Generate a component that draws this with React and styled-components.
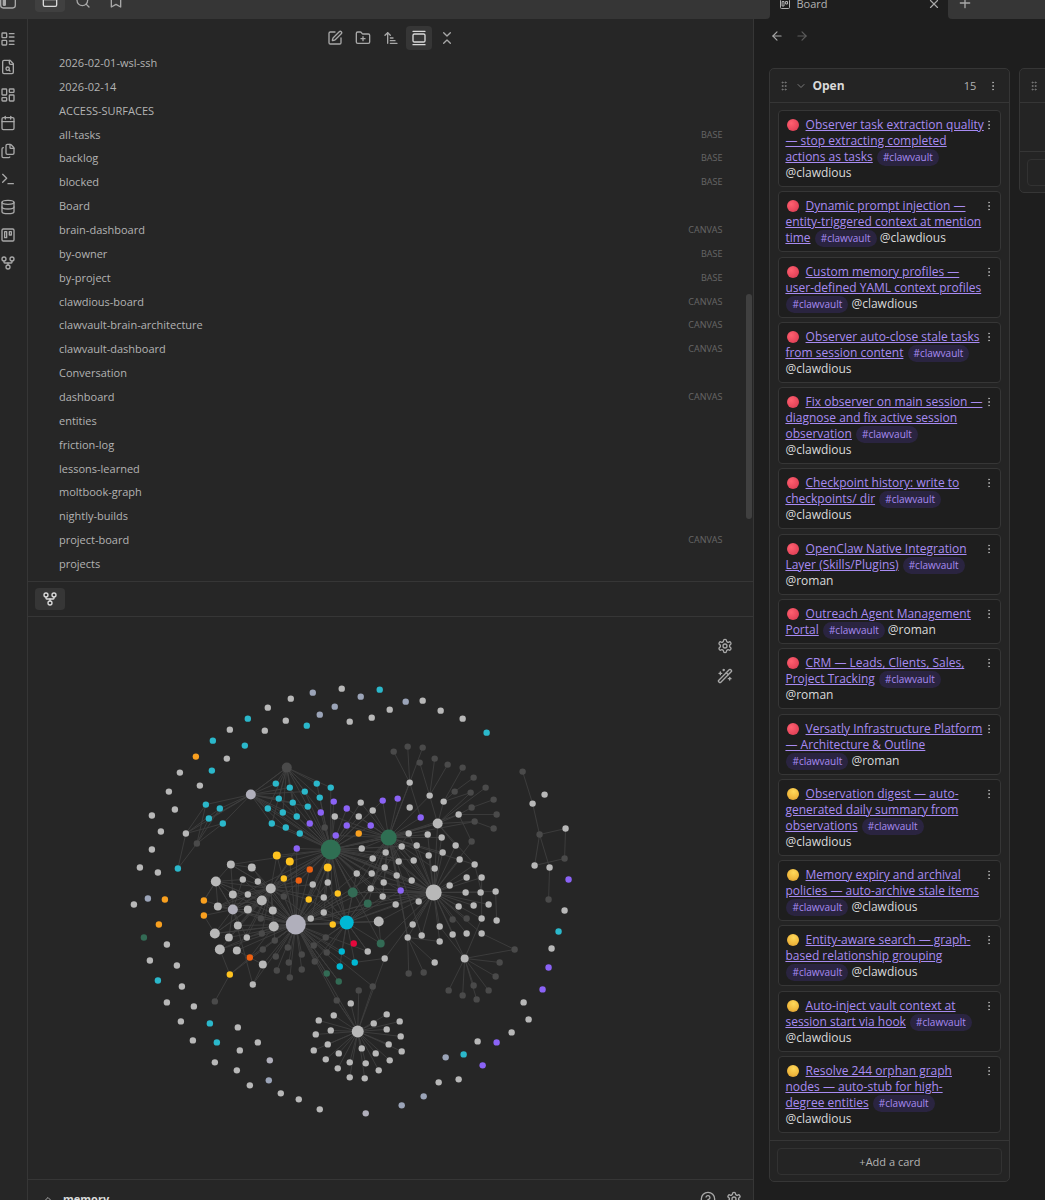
import { useState } from "react";
import styled, { createGlobalStyle, css } from "styled-components";
import {
  ArrowLeft,
  ArrowRight,
  ArrowUpNarrowWide,
  Bookmark,
  Calendar,
  ChevronDown,
  ChevronUp,
  ChevronsDownUp,
  CircleHelp,
  Database,
  EllipsisVertical,
  Files,
  FolderPlus,
  GalleryVertical,
  GitFork,
  GripVertical,
  LayoutDashboard,
  LayoutList,
  Plus,
  Search,
  SquarePen,
  Terminal,
  Trello,
  WandSparkles,
  X,
} from "lucide-react";

const files = [
  ["2026-02-01-wsl-ssh"],
  ["2026-02-14"],
  ["ACCESS-SURFACES"],
  ["all-tasks", "BASE"],
  ["backlog", "BASE"],
  ["blocked", "BASE"],
  ["Board"],
  ["brain-dashboard", "CANVAS"],
  ["by-owner", "BASE"],
  ["by-project", "BASE"],
  ["clawdious-board", "CANVAS"],
  ["clawvault-brain-architecture", "CANVAS"],
  ["clawvault-dashboard", "CANVAS"],
  ["Conversation"],
  ["dashboard", "CANVAS"],
  ["entities"],
  ["friction-log"],
  ["lessons-learned"],
  ["moltbook-graph"],
  ["nightly-builds"],
  ["project-board", "CANVAS"],
  ["projects"],
];

const cards = [
  { level: "red", title: "Observer task extraction quality — stop extracting completed actions as tasks", owner: "@clawdious" },
  { level: "red", title: "Dynamic prompt injection — entity-triggered context at mention time", owner: "@clawdious" },
  { level: "red", title: "Custom memory profiles — user-defined YAML context profiles", owner: "@clawdious" },
  { level: "red", title: "Observer auto-close stale tasks from session content", owner: "@clawdious" },
  { level: "red", title: "Fix observer on main session — diagnose and fix active session observation", owner: "@clawdious" },
  { level: "red", title: "Checkpoint history: write to checkpoints/ dir", owner: "@clawdious" },
  { level: "red", title: "OpenClaw Native Integration Layer (Skills/Plugins)", owner: "@roman" },
  { level: "red", title: "Outreach Agent Management Portal", owner: "@roman" },
  { level: "red", title: "CRM — Leads, Clients, Sales, Project Tracking", owner: "@roman" },
  { level: "red", title: "Versatly Infrastructure Platform — Architecture & Outline", owner: "@roman" },
  { level: "yellow", title: "Observation digest — auto-generated daily summary from observations", owner: "@clawdious" },
  { level: "yellow", title: "Memory expiry and archival policies — auto-archive stale items", owner: "@clawdious" },
  { level: "yellow", title: "Entity-aware search — graph-based relationship grouping", owner: "@clawdious" },
  { level: "yellow", title: "Auto-inject vault context at session start via hook", owner: "@clawdious" },
  { level: "yellow", title: "Resolve 244 orphan graph nodes — auto-stub for high-\ndegree entities", owner: "@clawdious" },
];

const colors = {
  gray: "#b8b8b8",
  slate: "#9ba4b8",
  lavender: "#b0afbb",
  dark: "#4a4a4a",
  teal: "#2bb8cb",
  cyan: "#00b8d4",
  purple: "#8b63f6",
  orange: "#f9a01f",
  ember: "#ee6010",
  yellow: "#ffc31f",
  green: "#2f6f53",
  moss: "#336b55",
  red: "#e5083c",
};

// nodes without any link, [x, y] or [x, y, radius]
const orphans = {
  gray: [
    [341, 688], [290, 698], [267, 707], [229, 729], [285, 720], [264, 730], [226, 758], [179, 772], [199, 785],
    [168, 791], [174, 809], [151, 815], [160, 831], [151, 849], [139, 867], [157, 872], [349, 721], [133, 904],
    [166, 944], [149, 960], [176, 965], [181, 986], [166, 1002], [193, 1006], [180, 1021], [192, 1040],
    [237, 1027], [257, 1042], [239, 1050], [214, 1062], [236, 1070], [249, 1085], [280, 1093], [298, 1099],
    [319, 1109], [422, 700], [389, 709], [371, 717], [440, 710], [462, 718], [544, 794], [564, 910], [551, 948],
    [523, 1002], [528, 1019], [511, 1032], [477, 1041], [458, 1079], [438, 1082], [409, 807], [434, 962],
  ],
  slate: [
    [312, 692], [334, 706], [319, 714], [147, 898], [268, 1080], [360, 696], [405, 701], [445, 1057],
    [423, 1096], [401, 1105],
  ],
  lavender: [[269, 1060], [365, 1113]],
  teal: [
    [247, 718], [212, 740], [244, 745], [211, 770], [306, 725], [379, 689], [486, 732], [157, 980], [209, 1023],
    [216, 1042], [558, 931], [463, 1054],
  ],
  purple: [[568, 879], [548, 967], [542, 989], [496, 1042], [482, 1065]],
  orange: [[195, 756], [164, 899], [158, 924]],
  moss: [[143, 937]],
  red: [[353, 943]],
};

const linked = {
  dark: [
    [286, 767, 5], [196, 843], [324, 827], [283, 896], [260, 918], [261, 933], [274, 940], [262, 949], [275, 956],
    [276, 970], [287, 947], [288, 962], [289, 977], [301, 954], [301, 969], [313, 945], [314, 961], [326, 952],
    [325, 937], [214, 1001], [336, 1000], [358, 990], [372, 986], [452, 919], [466, 918], [408, 973], [423, 972],
    [514, 949], [499, 962], [495, 976], [448, 990], [462, 995], [473, 985], [488, 990], [476, 999], [393, 751],
    [407, 746], [422, 747], [419, 762], [434, 758], [447, 764], [462, 767], [473, 777], [485, 787], [454, 791],
    [470, 792], [493, 799], [471, 807], [496, 814], [474, 821], [493, 828], [471, 841], [522, 771], [539, 834],
    [564, 858], [548, 899],
  ],
  gray: [
    [185, 833], [334, 816], [312, 884], [327, 882], [323, 897], [230, 864, 4], [251, 867, 4], [242, 879],
    [257, 881], [215, 881, 5], [270, 888, 5], [232, 894, 4], [247, 894], [261, 900, 5], [217, 906, 4],
    [247, 909, 4], [272, 910, 4], [237, 925, 4], [273, 926, 5], [214, 933, 5], [228, 937, 4], [246, 937],
    [219, 949, 5], [236, 950, 4], [262, 964, 4], [252, 984], [310, 918], [323, 912], [318, 1020], [333, 1015],
    [315, 1034], [330, 1030], [313, 1050], [327, 1044], [338, 1053], [325, 1059], [337, 1068], [349, 1062],
    [349, 1077], [350, 1003], [373, 1023], [386, 1014], [399, 1021], [386, 1029], [400, 1036], [388, 1044],
    [401, 1051], [361, 1048], [375, 1053], [389, 1060], [365, 1063], [378, 1070], [364, 1078], [367, 951],
    [384, 958], [378, 921, 5], [370, 888], [382, 896], [395, 904], [383, 882], [418, 901], [412, 924], [407, 937],
    [421, 935], [439, 926], [439, 941], [452, 934], [466, 933], [481, 933], [464, 958, 4], [458, 906], [473, 905],
    [488, 904], [481, 918], [496, 920], [465, 892], [480, 892], [495, 891], [449, 885], [409, 782], [429, 795],
    [443, 801], [458, 814], [437, 823, 5], [408, 833], [427, 834], [441, 837], [455, 845], [401, 846], [416, 845],
    [385, 852], [398, 861], [413, 860], [428, 855], [442, 852], [459, 859], [474, 864], [372, 858], [384, 867],
    [361, 848], [434, 868], [466, 877], [481, 877], [396, 875], [411, 880], [371, 873], [356, 873], [358, 816],
    [360, 802], [372, 810], [532, 803], [565, 828], [534, 865], [549, 867], [357, 1031, 6], [433, 892, 8],
  ],
  lavender: [[250, 794, 5], [232, 909, 5], [295, 924, 10]],
  teal: [
    [205, 804], [219, 808], [208, 818], [222, 823], [177, 868], [275, 783], [289, 787], [304, 791], [316, 783],
    [330, 787], [278, 798], [292, 802], [307, 806], [319, 797], [267, 808], [282, 812], [296, 816], [271, 823],
    [285, 827], [299, 833],
  ],
  cyan: [[346, 922, 7], [341, 951], [339, 966], [354, 962]],
  purple: [
    [333, 801], [320, 812], [309, 823], [346, 808], [346, 825], [335, 835], [296, 848], [382, 800], [397, 798],
    [420, 817], [370, 825], [400, 890],
  ],
  orange: [[203, 900], [203, 915], [358, 833]],
  ember: [[309, 869], [298, 880], [249, 957]],
  yellow: [[276, 855, 4], [289, 861, 4], [283, 878], [327, 867, 4], [337, 893], [308, 899], [332, 924], [229, 974]],
  moss: [[326, 973], [338, 981], [352, 892, 5], [367, 903, 4], [380, 943, 4]],
  green: [[330, 849, 10], [388, 837, 8]],
};

// every linked node inside the reach of a hub gets a line to it
const hubs = [
  [330, 849, 78],
  [388, 837, 62],
  [433, 892, 66],
  [295, 924, 86],
  [346, 922, 52],
  [357, 1031, 50],
  [286, 767, 58],
  [250, 794, 60],
  [270, 888, 56],
  [215, 881, 36],
  [232, 909, 34],
];

const extraLinks = [
  [330, 849, 388, 837], [330, 849, 437, 823], [330, 849, 433, 892], [330, 849, 411, 880], [330, 849, 396, 875],
  [330, 849, 413, 860], [330, 849, 416, 845], [330, 849, 230, 864], [330, 849, 217, 906], [330, 849, 232, 909],
  [330, 849, 250, 794], [330, 849, 214, 933], [330, 849, 418, 901], [330, 849, 380, 943], [330, 849, 395, 904],
  [295, 924, 433, 892], [295, 924, 352, 892], [295, 924, 384, 867], [295, 924, 378, 921], [295, 924, 336, 1000],
  [295, 924, 367, 903], [295, 924, 326, 973], [295, 924, 338, 981], [295, 924, 372, 986], [295, 924, 357, 1031],
  [346, 922, 433, 892], [346, 922, 367, 951], [346, 922, 408, 833], [346, 922, 395, 904], [346, 922, 400, 890],
  [352, 892, 388, 837], [352, 892, 433, 892], [352, 892, 330, 849], [367, 903, 388, 837], [367, 903, 433, 892],
  [380, 943, 433, 892], [380, 943, 378, 921], [384, 958, 433, 892], [384, 958, 357, 1031], [384, 958, 354, 962],
  [336, 1000, 357, 1031], [388, 837, 437, 823], [388, 837, 433, 892], [388, 837, 474, 821], [388, 837, 458, 814],
  [388, 837, 407, 937], [388, 837, 421, 935], [388, 837, 474, 864],
  [407, 937, 408, 973], [407, 937, 423, 972], [407, 937, 434, 962], [407, 937, 396, 875], [407, 937, 439, 941],
  [464, 958, 514, 949], [464, 958, 499, 962], [464, 958, 495, 976], [464, 958, 448, 990], [464, 958, 462, 995],
  [464, 958, 473, 985], [464, 958, 488, 990], [464, 958, 476, 999], [464, 958, 433, 892], [464, 958, 481, 918],
  [464, 958, 439, 926], [481, 933, 514, 949], [481, 877, 481, 918], [495, 891, 496, 920], [474, 864, 481, 892],
  [409, 782, 393, 751], [409, 782, 407, 746], [409, 782, 422, 747], [409, 782, 420, 817], [409, 782, 388, 837],
  [429, 795, 419, 762], [429, 795, 434, 758], [429, 795, 437, 823], [429, 795, 447, 764], [437, 823, 443, 801],
  [443, 801, 462, 767], [443, 801, 454, 791], [454, 791, 473, 777], [443, 801, 470, 792], [437, 823, 485, 787],
  [437, 823, 458, 814], [458, 814, 471, 807], [471, 807, 493, 799], [458, 814, 496, 814], [437, 823, 474, 821],
  [474, 821, 493, 828], [458, 814, 471, 841], [437, 823, 455, 845], [437, 823, 474, 864], [437, 823, 433, 892],
  [437, 823, 470, 792], [522, 771, 532, 803], [532, 803, 539, 834], [539, 834, 565, 828], [565, 828, 564, 858],
  [564, 858, 534, 865], [534, 865, 539, 834], [539, 834, 549, 867], [549, 867, 548, 899],
  [185, 833, 205, 804], [185, 833, 219, 808], [185, 833, 222, 823], [185, 833, 177, 868], [185, 833, 250, 794],
  [196, 843, 205, 804], [196, 843, 208, 818], [196, 843, 222, 823], [196, 843, 177, 868], [196, 843, 219, 808],
  [203, 900, 215, 881], [203, 915, 214, 933], [219, 949, 229, 974], [214, 1001, 229, 974], [229, 974, 249, 957],
  [249, 957, 273, 926], [236, 925, 252, 984], [262, 964, 252, 984], [262, 964, 236, 950], [230, 864, 270, 888],
  [230, 864, 251, 867], [214, 933, 261, 900], [219, 949, 261, 900], [219, 949, 273, 926], [214, 933, 273, 926],
  [228, 937, 270, 888], [236, 950, 270, 888], [217, 906, 261, 900], [215, 881, 261, 900], [230, 864, 232, 894],
];

function buildLinks() {
  const nodes = Object.values(linked).flat();
  const around = hubs.flatMap(([hx, hy, reach]) =>
    nodes
      .filter(([x, y]) => {
        const d = Math.hypot(x - hx, y - hy);
        return d > 1 && d < reach;
      })
      .map(([x, y]) => [hx, hy, x, y])
  );
  return [...around, ...extraLinks];
}

const links = buildLinks();

function Dots({ groups }) {
  return Object.entries(groups).map(([name, nodes]) => (
    <g key={name} fill={colors[name]}>
      {nodes.map(([x, y, r = 3.2]) => (
        <circle key={`${x}-${y}`} cx={x} cy={y} r={r} />
      ))}
    </g>
  ));
}

function Graph() {
  return (
    <GraphSvg viewBox="27 617 726 561" role="img" aria-label="Graph view">
      <g stroke="#3e3e3e" strokeWidth="0.9">
        {links.map(([x1, y1, x2, y2], index) => (
          <line key={index} x1={x1} y1={y1} x2={x2} y2={y2} />
        ))}
      </g>
      <Dots groups={orphans} />
      <Dots groups={linked} />
    </GraphSvg>
  );
}

function Glyph({ size = 16, children }) {
  return (
    <svg
      width={size}
      height={size}
      viewBox="0 0 24 24"
      fill="none"
      stroke="currentColor"
      strokeWidth="2"
      strokeLinecap="round"
      strokeLinejoin="round"
    >
      {children}
    </svg>
  );
}

function FileSearchIcon() {
  return (
    <Glyph>
      <path d="M15 2H6a2 2 0 0 0-2 2v16a2 2 0 0 0 2 2h12a2 2 0 0 0 2-2V7Z" />
      <path d="M14 2v4a2 2 0 0 0 2 2h4" />
      <circle cx="11.5" cy="14.5" r="2.5" />
      <path d="M13.3 16.3 15 18" />
    </Glyph>
  );
}

function SidebarIcon() {
  return (
    <Glyph>
      <rect x="1" y="3" width="22" height="18" rx="4" />
      <rect x="5" y="7" width="3" height="10" rx="1" fill="currentColor" />
    </Glyph>
  );
}

function FolderIcon() {
  return (
    <Glyph>
      <path d="M20 20a2 2 0 0 0 2-2V8a2 2 0 0 0-2-2h-7.9a2 2 0 0 1-1.69-.9L9.6 3.9A2 2 0 0 0 7.93 3H4a2 2 0 0 0-2 2v13a2 2 0 0 0 2 2Z" />
      <path d="M2 10h20" />
    </Glyph>
  );
}

function GearIcon() {
  return (
    <Glyph>
      <path d="M12.22 2h-.44a2 2 0 0 0-2 2v.18a2 2 0 0 1-1 1.73l-.43.25a2 2 0 0 1-2 0l-.15-.08a2 2 0 0 0-2.73.73l-.22.38a2 2 0 0 0 .73 2.73l.15.1a2 2 0 0 1 1 1.72v.51a2 2 0 0 1-1 1.74l-.15.09a2 2 0 0 0-.73 2.73l.22.38a2 2 0 0 0 2.73.73l.15-.08a2 2 0 0 1 2 0l.43.25a2 2 0 0 1 1 1.73V20a2 2 0 0 0 2 2h.44a2 2 0 0 0 2-2v-.18a2 2 0 0 1 1-1.73l.43-.25a2 2 0 0 1 2 0l.15.08a2 2 0 0 0 2.73-.73l.22-.39a2 2 0 0 0-.73-2.73l-.15-.08a2 2 0 0 1-1-1.74v-.5a2 2 0 0 1 1-1.74l.15-.09a2 2 0 0 0 .73-2.73l-.22-.38a2 2 0 0 0-2.73-.73l-.15.08a2 2 0 0 1-2 0l-.43-.25a2 2 0 0 1-1-1.73V4a2 2 0 0 0-2-2z" />
      <circle cx="12" cy="12" r="3" />
    </Glyph>
  );
}

const ribbon = [
  ["Outline", LayoutList],
  ["Search in file", FileSearchIcon],
  ["Dashboard", LayoutDashboard],
  ["Daily note", Calendar],
  ["Templates", Files],
  ["Command palette", Terminal],
  ["Bases", Database],
  ["New board", Trello],
  ["Graph view", GitFork],
];

const tools = [
  ["New note", SquarePen],
  ["New folder", FolderPlus],
  ["Change sort order", ArrowUpNarrowWide],
  ["Auto-reveal current file", GalleryVertical],
  ["Collapse all", ChevronsDownUp],
];

function Card({ card }) {
  return (
    <CardBox>
      <CardText>
        <Ball level={card.level} role="img" aria-label={card.level} />{" "}
        <a href="#task">{card.title}</a> <Tag href="#clawvault">#clawvault</Tag>{" "}
        {card.owner}
      </CardText>
      <CardMenu aria-label="Card menu">
        <EllipsisVertical size={12} />
      </CardMenu>
    </CardBox>
  );
}

export default function App() {
  const [tool, setTool] = useState("Auto-reveal current file");

  return (
    <>
      <GlobalStyle />
      <Window>
        <Ribbon>
          <RibbonTop>
            <IconButton bare aria-label="Collapse sidebar">
              <SidebarIcon />
            </IconButton>
          </RibbonTop>
          <RibbonList>
            {ribbon.map(([label, Icon]) => (
              <IconButton bare key={label} aria-label={label}>
                <Icon size={16} />
              </IconButton>
            ))}
          </RibbonList>
        </Ribbon>

        <Sidebar>
          <SideTabs>
            <IconButton tab active aria-label="Files">
              <FolderIcon />
            </IconButton>
            <IconButton tab aria-label="Search">
              <Search size={16} />
            </IconButton>
            <IconButton tab aria-label="Bookmarks">
              <Bookmark size={16} />
            </IconButton>
          </SideTabs>
          <Panels>
            <Explorer>
              <Toolbar>
                {tools.map(([label, Icon]) => (
                  <IconButton
                    key={label}
                    aria-label={label}
                    active={tool === label}
                    onClick={() => setTool(label)}
                  >
                    <Icon size={16} />
                  </IconButton>
                ))}
              </Toolbar>
              <FileList>
                {files.map(([name, kind]) => (
                  <FileRow key={name}>
                    <span>{name}</span>
                    {kind && <small>{kind}</small>}
                  </FileRow>
                ))}
              </FileList>
              <Scrollbar />
            </Explorer>
            <GraphTabs>
              <IconButton tab active aria-label="Graph">
                <GitFork size={16} />
              </IconButton>
            </GraphTabs>
            <GraphPanel>
              <Graph />
              <GraphControls>
                <IconButton bare aria-label="Graph settings">
                  <GearIcon />
                </IconButton>
                <IconButton bare aria-label="Animate">
                  <WandSparkles size={16} />
                </IconButton>
              </GraphControls>
            </GraphPanel>
            <VaultBar>
              <VaultRow>
                <ChevronUp size={12} />
                <strong>memory</strong>
                <IconButton aria-label="Help">
                  <CircleHelp size={16} />
                </IconButton>
                <IconButton aria-label="Settings">
                  <GearIcon />
                </IconButton>
              </VaultRow>
            </VaultBar>
          </Panels>
        </Sidebar>

        <Main>
          <TabBar>
            <TabGap />
            <Tab>
              <TabContent>
                <Trello size={12} />
                <span>Board</span>
                <IconButton small aria-label="Close tab">
                  <X size={14} />
                </IconButton>
              </TabContent>
            </Tab>
            <NewTab>
              <IconButton tab aria-label="New tab">
                <Plus size={16} />
              </IconButton>
            </NewTab>
          </TabBar>
          <NavRow>
            <IconButton small aria-label="Back">
              <ArrowLeft size={14} />
            </IconButton>
            <IconButton small disabled aria-label="Forward">
              <ArrowRight size={14} />
            </IconButton>
          </NavRow>
          <Board>
            <Lane full>
              <LaneHeader>
                <GripVertical size={12} />
                <ChevronDown size={12} />
                <h2>Open</h2>
                <span>15</span>
                <IconButton small aria-label="Lane menu">
                  <EllipsisVertical size={12} />
                </IconButton>
              </LaneHeader>
              <CardList>
                {cards.map((card) => (
                  <Card key={card.title} card={card} />
                ))}
              </CardList>
              <LaneFooter>
                <AddButton>+Add a card</AddButton>
              </LaneFooter>
            </Lane>
            <Lane>
              <LaneHeader>
                <GripVertical size={12} />
              </LaneHeader>
              <EmptyList />
              <LaneFooter>
                <AddButton aria-label="Add a card" />
              </LaneFooter>
            </Lane>
          </Board>
        </Main>
      </Window>
    </>
  );
}

// --------------------------css

const GlobalStyle = createGlobalStyle`
  * {
    box-sizing: border-box;
  }
  body {
    margin: 0;
    background-color: #1e1e1e;
    color: #dadada;
    font-family: "Open Sans", "Noto Sans", sans-serif;
    font-size: 11px;
    line-height: 16px;
  }
  button {
    font: inherit;
    color: inherit;
  }
  svg {
    display: block;
    flex-shrink: 0;
  }
`;

const own = (...names) => ({ shouldForwardProp: (prop) => !names.includes(prop) });

const Window = styled.div`
  display: flex;
  height: 100vh;
  overflow: hidden;
`;

const IconButton = styled.button.withConfig(own("bare", "small", "tab", "active"))`
  display: flex;
  align-items: center;
  justify-content: center;
  flex-shrink: 0;
  width: 26px;
  height: 24px;
  padding: 0;
  border: none;
  border-radius: 4px;
  background-color: ${(props) => (props.active ? "#363636" : "transparent")};
  color: ${(props) => (props.active ? "#dadada" : "#a8a8a8")};
  ${(props) =>
    props.tab &&
    css`
      width: 30px;
      height: 22px;
    `}
  ${(props) =>
    (props.small || props.bare) &&
    css`
      width: 16px;
      height: 16px;
    `}
  &:disabled {
    color: #5c5c5c;
  }
`;

const Ribbon = styled.nav`
  flex: 0 0 28px;
  display: flex;
  flex-direction: column;
  background-color: #262626;
`;

const topStrip = css`
  display: flex;
  align-items: flex-end;
  flex: 0 0 19px;
  min-height: 0;
  height: 19px;
  overflow: hidden;
  background-color: #363636;
`;

const RibbonTop = styled.div`
  ${topStrip}
  padding-bottom: 9px;
`;

const RibbonList = styled.div`
  flex: 1;
  display: flex;
  flex-direction: column;
  gap: 12px;
  padding-top: 12px;
  border-right: 1px solid #363636;
`;

const Sidebar = styled.aside`
  flex: 5;
  min-width: 0;
  display: flex;
  flex-direction: column;
  background-color: #262626;
`;

const SideTabs = styled.div`
  ${topStrip}
  gap: 3px;
  padding: 0 7px 7px;
  ${IconButton}:first-child {
    background-color: #404040;
  }
`;

const Panels = styled.div`
  flex: 1;
  min-height: 0;
  display: grid;
  grid-template-rows: minmax(0, 1fr) 36px minmax(0, 1fr) 21px;
  border-right: 1px solid #363636;
`;

const Explorer = styled.section`
  position: relative;
  display: flex;
  flex-direction: column;
`;

const Toolbar = styled.div`
  display: flex;
  justify-content: center;
  gap: 2px;
  padding: 7px 0 1px;
`;

const FileList = styled.ul`
  flex: 1;
  display: grid;
  grid-auto-rows: 1fr;
  margin: 0;
  padding: 0 31px 5px;
  list-style: none;
`;

const FileRow = styled.li`
  display: flex;
  align-items: center;
  justify-content: space-between;
  color: #b3b3b3;
  small {
    font-size: 9px;
    color: #666666;
  }
`;

const Scrollbar = styled.div`
  position: absolute;
  top: 49%;
  bottom: 11%;
  right: 1px;
  width: 6px;
  border-radius: 3px;
  background-color: #404040;
`;

const GraphTabs = styled.div`
  display: flex;
  align-items: center;
  padding: 0 7px;
  border-top: 1px solid #363636;
  border-bottom: 1px solid #363636;
`;

const GraphPanel = styled.section`
  position: relative;
`;

const GraphSvg = styled.svg`
  width: 100%;
  height: 100%;
`;

const GraphControls = styled.div`
  position: absolute;
  top: 21px;
  right: 20px;
  display: flex;
  flex-direction: column;
  gap: 14px;
`;

const VaultBar = styled.footer`
  overflow: hidden;
  border-top: 1px solid #363636;
`;

const VaultRow = styled.div`
  display: flex;
  align-items: center;
  height: 38px;
  padding: 0 6px 0 14px;
  color: #a8a8a8;
  strong {
    flex: 1;
    margin-left: 9px;
    color: #dadada;
  }
`;

const Main = styled.main`
  flex: 2;
  min-width: 0;
  display: flex;
  flex-direction: column;
  overflow: hidden;
`;

const TabBar = styled.div`
  display: flex;
  flex: 0 0 19px;
  height: 19px;
  min-height: 0;
  overflow: hidden;
`;

const TabGap = styled.div`
  flex: 0 0 16px;
  background-color: #363636;
  border-bottom-right-radius: 4px;
`;

const Tab = styled.div`
  flex: 0 0 178px;
  display: flex;
  align-items: flex-end;
  padding: 0 6px 7px 9px;
`;

const TabContent = styled.div`
  flex: 1;
  display: flex;
  align-items: center;
  gap: 5px;
  height: 16px;
  color: #b3b3b3;
  span {
    flex: 1;
  }
`;

const NewTab = styled.div`
  flex: 1;
  display: flex;
  align-items: flex-end;
  padding: 0 2px 5px;
  background-color: #363636;
  border-bottom-left-radius: 4px;
`;

const NavRow = styled.div`
  flex: 0 0 34px;
  display: flex;
  align-items: center;
  gap: 9px;
  padding-left: 15px;
`;

const Board = styled.div`
  flex: 1;
  min-height: 0;
  display: flex;
  align-items: flex-start;
  gap: 9px;
  padding: 15px 0 18px 15px;
`;

const Lane = styled.section.withConfig(own("full"))`
  flex: 0 0 241px;
  display: flex;
  flex-direction: column;
  align-self: ${(props) => (props.full ? "stretch" : "flex-start")};
  border: 1px solid #363636;
  border-radius: 5px;
  background-color: #242424;
`;

const LaneHeader = styled.header`
  display: flex;
  align-items: center;
  height: 34px;
  gap: 5px;
  padding: 0 8px;
  border-bottom: 1px solid #363636;
  color: #7a7a7a;
  h2 {
    flex: 1;
    margin: 0;
    font-size: 12px;
    font-weight: 700;
    color: #dadada;
  }
  span {
    padding-right: 4px;
    color: #b3b3b3;
  }
`;

const CardList = styled.div`
  flex: 1;
  display: flex;
  flex-direction: column;
  justify-content: space-between;
  padding: 7px 8px;
`;

const EmptyList = styled.div`
  height: 48px;
`;

const CardBox = styled.article`
  display: flex;
  padding: 6px 8px 5px 6px;
  border: 1px solid #363636;
  border-radius: 4px;
  background-color: #1e1e1e;
`;

const CardText = styled.p`
  flex: 1;
  margin: 0;
  font-size: 12px;
  white-space: pre-line;
  a {
    color: #a88bf2;
  }
`;

const CardMenu = styled.button`
  display: flex;
  align-items: center;
  justify-content: center;
  width: 6px;
  height: 16px;
  padding: 0;
  border: none;
  background: none;
  color: #a8a8a8;
`;

const Ball = styled.span.withConfig(own("level"))`
  display: inline-block;
  width: 12px;
  height: 12px;
  margin: 0 3px 0 2px;
  border-radius: 50%;
  vertical-align: -2px;
  background: ${(props) =>
    props.level === "red"
      ? "radial-gradient(circle at 35% 35%, #ff6070, #e8475c 60%, #c93a4e)"
      : "radial-gradient(circle at 55% 30%, #ffd95a, #f0b73c 60%, #c98f30)"};
`;

const Tag = styled.a`
  && {
    margin-left: 1px;
    padding: 1px 6px 2px;
    border-radius: 9px;
    background-color: #2a2440;
    font-size: 10px;
    line-height: 10px;
    text-decoration: none;
  }
`;

const LaneFooter = styled.div`
  padding: 7px 7px 6px;
  border-top: 1px solid #363636;
`;

const AddButton = styled.button`
  display: block;
  width: 100%;
  height: 27px;
  padding: 0;
  border: 1px solid #323232;
  border-radius: 4px;
  background-color: #242424;
  color: #b3b3b3;
`;
